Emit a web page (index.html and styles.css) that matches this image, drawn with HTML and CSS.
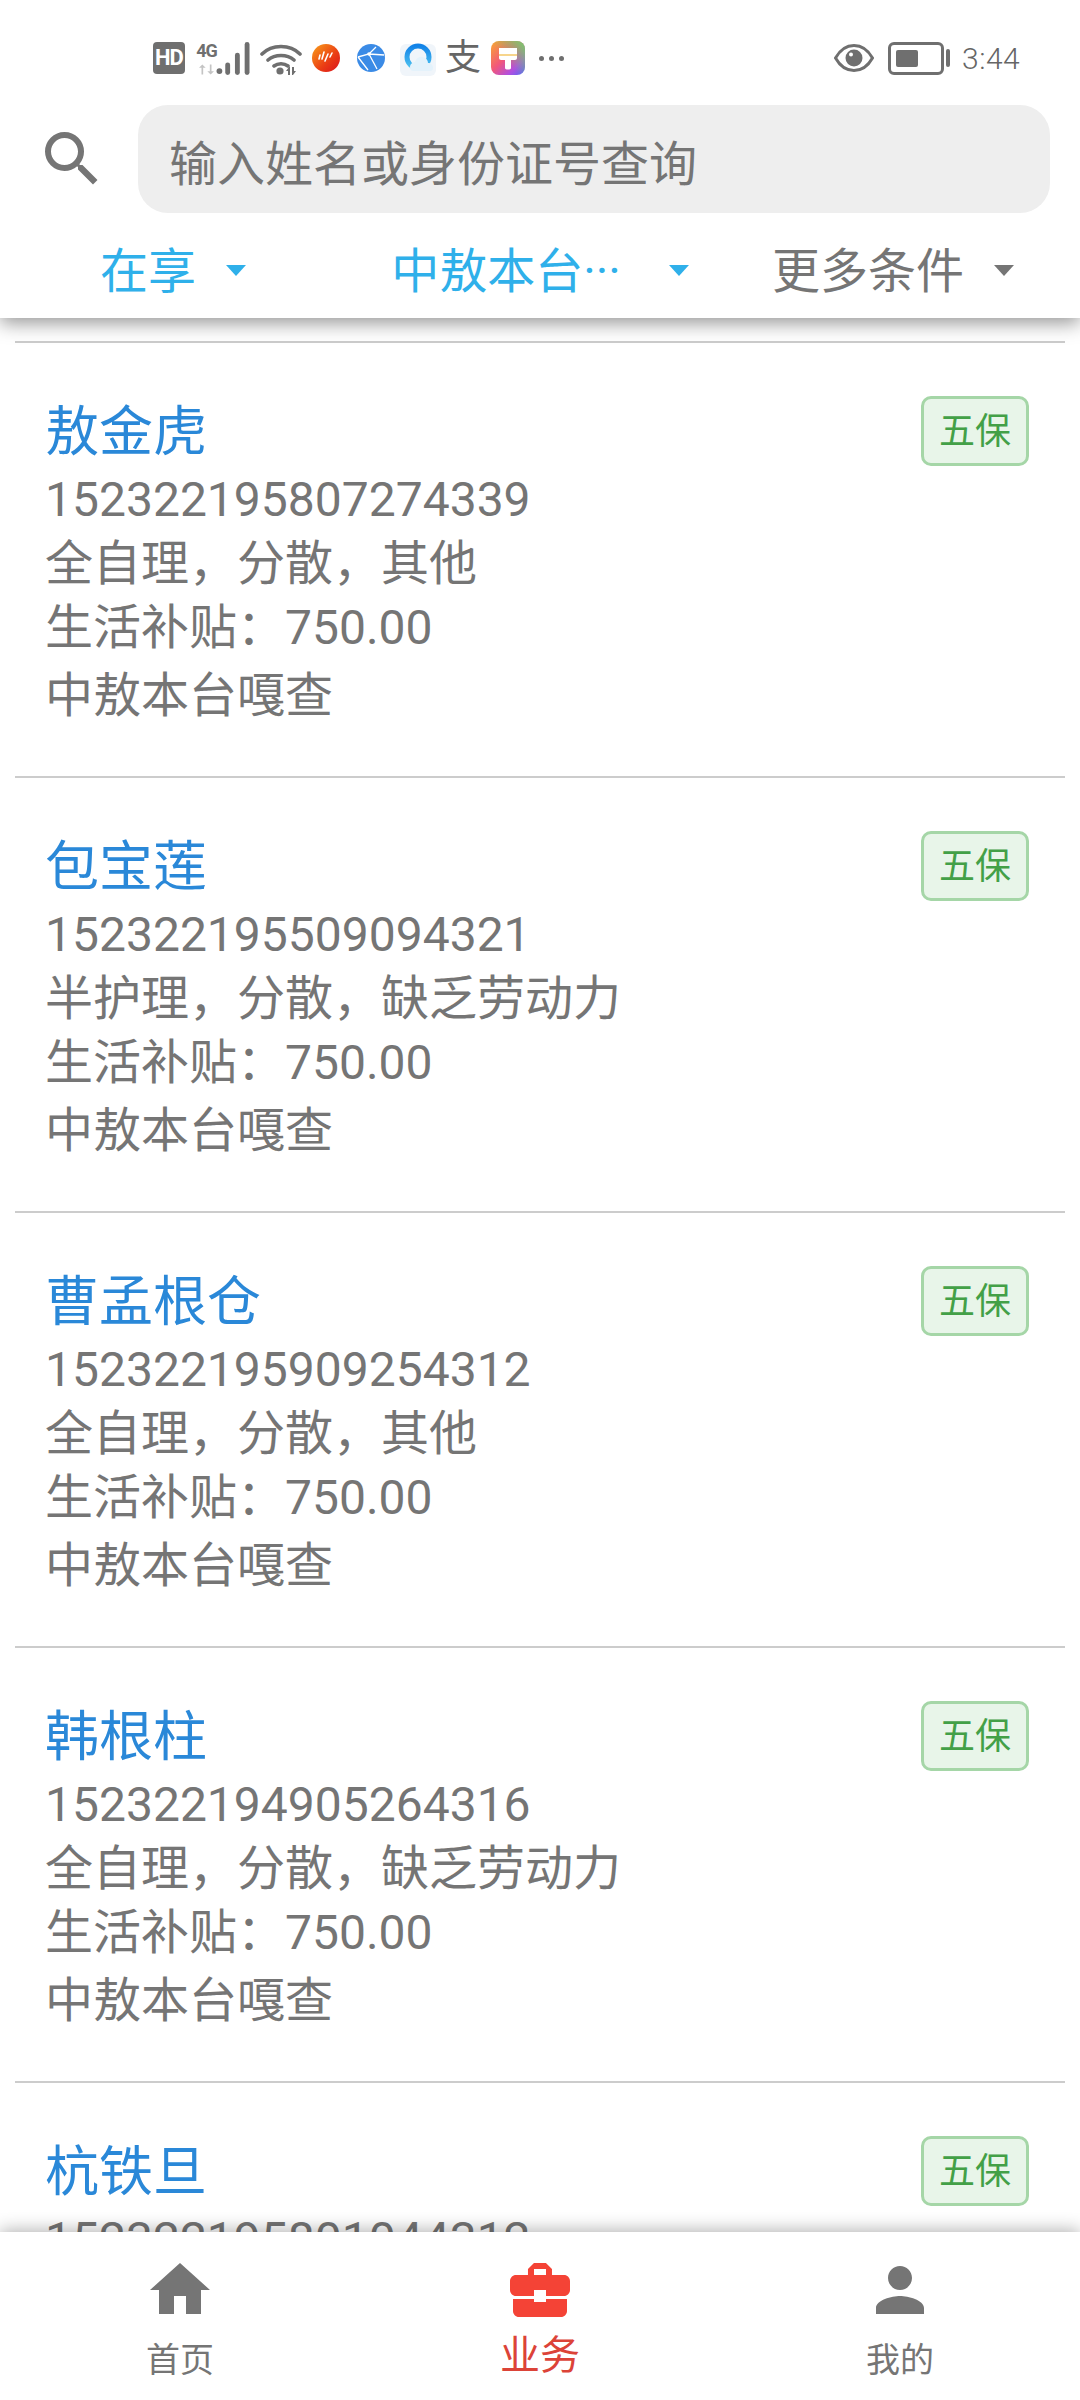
FILE: index.html
```html
<!DOCTYPE html>
<html lang="zh-CN">
<head>
    <meta charset="UTF-8">
    <meta name="viewport" content="width=device-width, initial-scale=1.0">
    <title>查询</title>
    <link rel="stylesheet" href="styles.css">
</head>
<body>
    <div class="app">
        <header class="header">
            <!-- Status bar -->
            <div class="status">
                <div class="status-left">
                    <span class="hd">HD</span>
                    <span class="signal">
                        <span class="signal-text">
                            <span class="net">4G</span>
                            <svg class="arrows" viewBox="0 0 18 12"><path d="M4 0 0 4h3v8h2V4h3zM14 12l4-4h-3V0h-2v8h-3z"/></svg>
                        </span>
                        <svg class="bars" viewBox="0 0 35 34"><circle cx="3" cy="30" r="3"/><rect x="9" y="21" width="5" height="13" rx="2.500"/><rect x="19" y="11" width="5" height="23" rx="2.500"/><rect x="29" y="0" width="5" height="34" rx="2.500"/></svg>
                    </span>
                    <svg class="wifi" viewBox="0 0 42 34"><path d="M2 13C12 3 30 3 40 13M8 19c7-6 19-6 26 0M14 25c4-3 10-3 14 0" fill="none" stroke="#6f6f6f" stroke-width="3.600" stroke-linecap="round"/><circle cx="20" cy="30" r="3.600"/><path d="M29 26l-3 4h2v4h2v-8zM33 34l3-4h-2v-4h-2v8z"/></svg>
                    <svg class="app-icon red" viewBox="0 0 28 28">
                        <defs><linearGradient id="redFill" x1="0" y1="0" x2="1" y2="1"><stop offset="0" stop-color="#f9a01b"/><stop offset="0.6" stop-color="#ea3c14"/><stop offset="1" stop-color="#d9121f"/></linearGradient></defs>
                        <circle cx="14" cy="14" r="14" fill="url(#redFill)"/>
                        <path d="M8 11 7 15M12 8l-2 7M16 10l-3 7M20 9l-2 4" stroke="#fff" stroke-width="1.600" stroke-linecap="round" fill="none"/>
                    </svg>
                    <svg class="app-icon globe" viewBox="0 0 28 28">
                        <circle cx="14" cy="14" r="14" fill="#3b8be6"/>
                        <path d="M19 3 12 10 1 13M12 10l15 1M12 10l8 15M1 13l10 13" stroke="#fff" stroke-width="1.300" fill="none"/>
                        <circle cx="12" cy="10" r="1.800" fill="#fff"/>
                    </svg>
                    <svg class="app-icon browser" viewBox="0 0 36 36">
                        <defs><linearGradient id="ringFill" x1="0" y1="0" x2="0" y2="1"><stop offset="0" stop-color="#1283e8"/><stop offset="1" stop-color="#4fc3f0"/></linearGradient></defs>
                        <rect y="4" width="36" height="32" rx="6" fill="#f0f5fa"/>
                        <circle cx="18" cy="17" r="11" fill="none" stroke="url(#ringFill)" stroke-width="5"/>
                        <path d="M13 31c-2 0-3-2-3-4 0-3 3-5 5-5 1-4 5-6 8-5 3 1 5 3 5 6 3 0 5 2 5 5 0 2-1 3-3 3z" fill="#e4f2fb"/>
                    </svg>
                    <span class="alipay">支</span>
                    <svg class="app-icon brush" viewBox="0 0 34 34">
                        <defs>
                            <linearGradient id="brushFill" x1="0" y1="0" x2="1" y2="1"><stop offset="0" stop-color="#f9a92e"/><stop offset="0.45" stop-color="#f2577a"/><stop offset="0.75" stop-color="#b04fe0"/><stop offset="1" stop-color="#4f6cf5"/></linearGradient>
                            <linearGradient id="brushGlow" x1="1" y1="0" x2="0.4" y2="0.5"><stop offset="0" stop-color="#6fd36a"/><stop offset="1" stop-color="#6fd36a" stop-opacity="0"/></linearGradient>
                        </defs>
                        <rect width="34" height="34" rx="8" fill="url(#brushFill)"/>
                        <rect width="34" height="34" rx="8" fill="url(#brushGlow)"/>
                        <path d="M8 7h18v10c0 1-1 2-2 2h-4v8c0 2-6 2-6 0v-8h-4c-1 0-2-1-2-2z" fill="#fff"/>
                        <rect x="8" y="13" width="18" height="2" fill="#f7d58c"/>
                    </svg>
                    <span class="more-dots"><i></i><i></i><i></i></span>
                </div>
                <div class="status-right">
                    <svg class="eye" viewBox="0 0 40 30"><path d="M1.500 15C6 7 12 2.500 20 2.500S34 7 38.500 15C34 23 28 27.500 20 27.500S6 23 1.500 15z" fill="none" stroke="#6f6f6f" stroke-width="3"/><circle cx="20" cy="15" r="8.500"/><circle cx="17" cy="11.500" r="2" fill="#fff"/></svg>
                    <span class="battery"><span class="battery-fill"></span></span>
                    <span class="battery-nub"></span>
                    <span class="clock">3:44</span>
                </div>
            </div>

            <!-- Search -->
            <div class="search">
                <svg class="search-icon" viewBox="0 0 24 24"><path d="M15.500 14h-.79l-.28-.27A6.470 6.470 0 0 0 16 9.500 6.500 6.500 0 1 0 9.500 16c1.610 0 3.090-.59 4.230-1.570l.27.28v.79l5 4.990L20.490 19l-4.990-5zm-6 0C7.010 14 5 11.990 5 9.500S7.010 5 9.500 5 14 7.010 14 9.500 11.990 14 9.500 14z"/></svg>
                <div class="search-box">输入姓名或身份证号查询</div>
            </div>

            <!-- Filters -->
            <div class="filters">
                <div class="filter active"><span>在享</span><i class="caret"></i></div>
                <div class="filter active wide"><span>中敖本台···</span><i class="caret"></i></div>
                <div class="filter"><span>更多条件</span><i class="caret"></i></div>
            </div>
        </header>

        <main class="list">
            <div class="item">
                <div class="info">
                    <div class="name">敖金虎</div>
                    <div class="line">152322195807274339</div>
                    <div class="line">全自理，分散，其他</div>
                    <div class="line">生活补贴：750.00</div>
                    <div class="line place">中敖本台嘎查</div>
                </div>
                <span class="tag">五保</span>
            </div>
            <div class="item">
                <div class="info">
                    <div class="name">包宝莲</div>
                    <div class="line">152322195509094321</div>
                    <div class="line">半护理，分散，缺乏劳动力</div>
                    <div class="line">生活补贴：750.00</div>
                    <div class="line place">中敖本台嘎查</div>
                </div>
                <span class="tag">五保</span>
            </div>
            <div class="item">
                <div class="info">
                    <div class="name">曹孟根仓</div>
                    <div class="line">152322195909254312</div>
                    <div class="line">全自理，分散，其他</div>
                    <div class="line">生活补贴：750.00</div>
                    <div class="line place">中敖本台嘎查</div>
                </div>
                <span class="tag">五保</span>
            </div>
            <div class="item">
                <div class="info">
                    <div class="name">韩根柱</div>
                    <div class="line">152322194905264316</div>
                    <div class="line">全自理，分散，缺乏劳动力</div>
                    <div class="line">生活补贴：750.00</div>
                    <div class="line place">中敖本台嘎查</div>
                </div>
                <span class="tag">五保</span>
            </div>
            <div class="item">
                <div class="info">
                    <div class="name">杭铁旦</div>
                    <div class="line">152322195801044312</div>
                </div>
                <span class="tag">五保</span>
            </div>
        </main>

        <nav class="tabbar">
            <div class="tab">
                <svg viewBox="0 0 24 24"><path d="M10 20v-6h4v6h5v-8h3L12 3 2 12h3v8z"/></svg>
                <span>首页</span>
            </div>
            <div class="tab active">
                <svg viewBox="0 0 24 24"><path d="M10 16v-1H3.010L3 19c0 1.110.89 2 2 2h14c1.110 0 2-.89 2-2v-4h-7v1h-4zm10-9h-4.010V5l-2-2h-4l-2 2v2H4c-1.100 0-2 .9-2 2v3c0 1.100.9 2 2 2h6v-2h4v2h6c1.100 0 2-.9 2-2V9c0-1.100-.9-2-2-2zm-6 0h-4V5h4v2z"/></svg>
                <span>业务</span>
            </div>
            <div class="tab">
                <svg viewBox="0 0 24 24"><path d="M12 12c2.210 0 4-1.790 4-4s-1.790-4-4-4-4 1.790-4 4 1.790 4 4 4zm0 2c-2.670 0-8 1.340-8 4v2h16v-2c0-2.660-5.330-4-8-4z"/></svg>
                <span>我的</span>
            </div>
        </nav>
    </div>
</body>
</html>
```

FILE: styles.css
```css
/* General */
body {
    margin: 0;
    font-family: Roboto, "Noto Sans CJK SC", sans-serif;
    color: #757575;
    background: #fff;
}

.app {
    width: 1080px;
    height: 2400px;
    display: flex;
    flex-direction: column;
    overflow: hidden;
}

/* Header */
.header {
    flex: none;
    position: relative;
    z-index: 2;
    height: 318px;
    background: #fff;
    box-shadow: 0 5px 18px rgba(0, 0, 0, 0.42);
}

/* Status bar */
.status {
    height: 92px;
    padding: 12px 0 0 153px;
    display: flex;
    align-items: center;
    justify-content: space-between;
    fill: #6f6f6f;
}

.status-left, .status-right {
    display: flex;
    align-items: center;
}

.hd {
    width: 32px;
    height: 32px;
    border-radius: 4px;
    background: #6f6f6f;
    color: #fff;
    font-size: 22px;
    font-weight: 700;
    line-height: 32px;
    text-align: center;
    letter-spacing: -1px;
}

.signal {
    display: flex;
    align-items: flex-end;
    margin-left: 12px;
}

.signal-text {
    display: flex;
    flex-direction: column;
    align-items: center;
    width: 19px;
}

.net {
    font-size: 18px;
    font-weight: 700;
    line-height: 20px;
    letter-spacing: -1px;
    color: #6f6f6f;
}

.arrows {
    width: 15px;
    height: 11px;
    margin-top: 3px;
    fill: #c4c4c4;
}

.bars {
    width: 35px;
    height: 33px;
}

.wifi {
    width: 42px;
    height: 34px;
    margin-left: 9px;
}

.app-icon {
    display: block;
}

.red {
    width: 28px;
    height: 28px;
    margin-left: 10px;
}

.globe {
    width: 28px;
    height: 28px;
    margin-left: 17px;
}

.browser {
    width: 36px;
    height: 36px;
    margin-left: 15px;
}

.alipay {
    width: 36px;
    margin-left: 9px;
    font-size: 36px;
    line-height: 36px;
    text-align: center;
    color: #666;
}

.brush {
    width: 34px;
    height: 34px;
    margin-left: 10px;
}

.more-dots {
    display: flex;
    gap: 5px;
    margin-left: 14px;
}

.more-dots i {
    width: 5px;
    height: 5px;
    border-radius: 50%;
    background: #6f6f6f;
}

.eye {
    width: 40px;
    height: 30px;
}

.battery {
    width: 56px;
    height: 33px;
    box-sizing: border-box;
    margin-left: 14px;
    padding: 5px;
    border: 3px solid #6f6f6f;
    border-radius: 6px;
}

.battery-fill {
    display: block;
    width: 22px;
    height: 100%;
    border-radius: 2px;
    background: #6f6f6f;
}

.battery-nub {
    width: 4px;
    height: 18px;
    margin-left: 2px;
    border-radius: 2px;
    background: #6f6f6f;
}

.clock {
    width: 118px;
    margin-left: 12px;
    font-size: 30px;
    font-weight: 300;
    letter-spacing: 0.5px;
    color: #666;
}

/* Search */
.search {
    height: 110px;
    display: flex;
    align-items: center;
    gap: 30px;
    padding: 0 30px 0 36px;
}

.search-icon {
    flex: none;
    width: 72px;
    height: 72px;
    fill: #757575;
}

.search-box {
    flex: 1;
    height: 108px;
    padding-left: 31px;
    border-radius: 30px;
    background: #eee;
    font-size: 48px;
    line-height: 120px;
}

/* Filters */
.filters {
    display: grid;
    grid-template-columns: repeat(3, 1fr);
    padding-top: 5px;
}

.filter {
    display: flex;
    align-items: center;
    justify-content: center;
    gap: 30px;
    height: 96px;
    padding-right: 14px;
    font-size: 48px;
}

.filter.active {
    color: #2fb0ea;
}

.filter.wide {
    gap: 48px;
    padding-right: 0;
}

.caret {
    width: 0;
    height: 0;
    margin-top: 6px;
    border-left: 10px solid transparent;
    border-right: 10px solid transparent;
    border-top: 11px solid currentColor;
}

/* List */
.list {
    flex: 1;
    min-height: 0;
    overflow: hidden;
    padding: 23px 15px 0;
}

.item {
    display: flex;
    align-items: flex-start;
    justify-content: space-between;
    height: 435px;
    box-sizing: border-box;
    padding: 53px 36px 0 30px;
    border-top: 2px solid #ccc;
}

.info {
    padding-top: 2px;
}

.name {
    font-size: 54px;
    line-height: 70px;
    color: #2a88d8;
}

.line {
    font-size: 48px;
    line-height: 64px;
}

.place {
    margin-top: 4px;
}

.tag {
    width: 108px;
    height: 70px;
    box-sizing: border-box;
    border: 3px solid #a5d6a7;
    border-radius: 10px;
    background: #e8f5e9;
    color: #43a047;
    font-size: 36px;
    line-height: 66px;
    text-align: center;
}

/* Bottom tabs */
.tabbar {
    flex: none;
    position: relative;
    z-index: 2;
    height: 168px;
    display: grid;
    grid-template-columns: repeat(3, 1fr);
    background: #fff;
    box-shadow: 0 -2px 16px rgba(0, 0, 0, 0.3);
}

.tab {
    display: flex;
    flex-direction: column;
    align-items: center;
    padding-top: 22px;
    fill: #757575;
    font-size: 34px;
    line-height: 48px;
}

.tab svg {
    width: 72px;
    height: 72px;
    margin-bottom: 10px;
}

.tab.active {
    fill: #f44336;
    color: #dc4338;
    font-size: 40px;
}

.tab.active span {
    margin-top: -4px;
}
```
